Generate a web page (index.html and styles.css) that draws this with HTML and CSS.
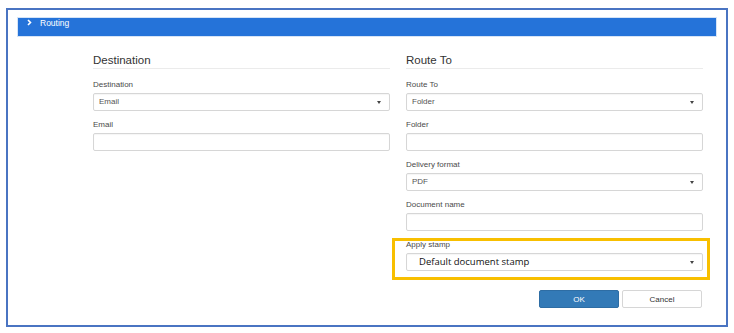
FILE: index.html
```html
<!DOCTYPE html>
<html lang="en">
<head>
    <meta charset="UTF-8">
    <title>Routing</title>
    <link rel="stylesheet" href="styles.css">
</head>
<body>

    <div class="frame">
        <div class="bar">
            <svg class="chevron" width="5" height="7" viewBox="0 0 5 7"><path d="M1 1 L3.5 3.5 L1 6" fill="none" stroke="#fff" stroke-width="1.6"/></svg>
            <span>Routing</span>
        </div>

        <div class="form">
            <!-- 左列: 目的地 -->
            <div class="col">
                <h2 class="col-title">Destination</h2>
                <div class="field">
                    <label>Destination</label>
                    <div class="select">Email<i class="caret"></i></div>
                </div>
                <div class="field">
                    <label>Email</label>
                    <div class="input"></div>
                </div>
            </div>

            <!-- 右列: 路由 -->
            <div class="col">
                <h2 class="col-title">Route To</h2>
                <div class="field">
                    <label>Route To</label>
                    <div class="select">Folder<i class="caret"></i></div>
                </div>
                <div class="field">
                    <label>Folder</label>
                    <div class="input"></div>
                </div>
                <div class="field">
                    <label>Delivery format</label>
                    <div class="select">PDF<i class="caret"></i></div>
                </div>
                <div class="field">
                    <label>Document name</label>
                    <div class="input"></div>
                </div>
                <div class="field highlight">
                    <label>Apply stamp</label>
                    <div class="select stamp">Default document stamp<i class="caret"></i></div>
                </div>

                <div class="actions">
                    <button class="btn btn-ok">OK</button>
                    <button class="btn btn-cancel">Cancel</button>
                </div>
            </div>
        </div>
    </div>

</body>
</html>
```

FILE: styles.css
```css
body,h2,label,button{ margin: 0; padding: 0; }
body{
    background: #fff;
    font-family: "Liberation Sans", Arial, sans-serif;
}

.frame{
    width: 722px;
    height: 319px;
    margin: 8px 0 0 6px;
    border: 2px solid #4a74c2;
    box-sizing: border-box;
    padding: 8px 10px 0;
}

.bar{
    height: 18px;
    background: #2573d9;
    box-shadow: 0 0 0 1px #d6e4f6;
    display: flex;
    align-items: flex-start;
    color: #fff;
    font-size: 8.5px;
    line-height: 10px;
    padding-left: 9px;
}

.bar .chevron{
    margin-top: 1px;
    margin-right: 8px;
}

.form{
    display: flex;
    gap: 16px;
    padding: 17px 13px 0 75px;
}

.col{
    flex: 1;
}

.col-title{
    font-size: 11.5px;
    line-height: 14px;
    font-weight: normal;
    color: #333;
    padding-bottom: 1px;
    border-bottom: 1px solid #ebebeb;
    margin-bottom: 11px;
}

.field{
    margin-bottom: 9px;
}

.field label{
    display: block;
    font-size: 8px;
    line-height: 10px;
    color: #4a4a4a;
    margin-bottom: 3px;
}

.select,
.input{
    height: 18px;
    box-sizing: border-box;
    border: 1px solid #d6d6d6;
    border-radius: 2px;
    box-shadow: inset 0 1px 1px rgba(0,0,0,.04);
    font-size: 8px;
    line-height: 16px;
    color: #555;
    padding-left: 5px;
    position: relative;
}

.caret{
    position: absolute;
    right: 8px;
    top: 7px;
    border-left: 2.5px solid transparent;
    border-right: 2.5px solid transparent;
    border-top: 3px solid #444;
}

.stamp{
    font-family: "Open Sans", "Noto Sans", sans-serif;
    font-size: 9.5px;
    color: #111;
    padding-left: 12px;
}

/* 黄色标注框 */
.highlight{
    position: relative;
}
.highlight::after{
    content: '';
    position: absolute;
    left: -14px;
    right: -7px;
    top: -2px;
    bottom: -9px;
    border: 3px solid #f8bf00;
}

.actions{
    display: flex;
    justify-content: flex-end;
    gap: 3px;
    margin-top: 19px;
    padding-right: 1px;
}

.btn{
    width: 80px;
    height: 18px;
    border-radius: 2px;
    font-family: "Liberation Sans", Arial, sans-serif;
    font-size: 8px;
    cursor: pointer;
}

.btn-ok{
    background: #337ab7;
    border: 1px solid #2e6da4;
    color: #fff;
}

.btn-cancel{
    background: #fff;
    border: 1px solid #d6d6d6;
    color: #333;
}
```
